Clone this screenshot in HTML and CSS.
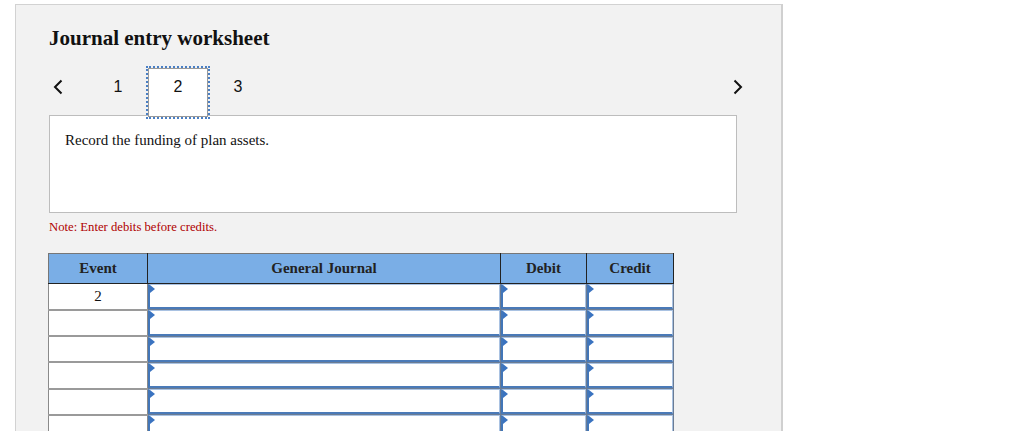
FILE: index.html
```html
<!DOCTYPE html>
<html>
<head>
<meta charset="utf-8">
<link rel="stylesheet" href="styles.css">
</head>
<body>
<div class="panel">
  <h1 class="title">Journal entry worksheet</h1>
  <div class="nav">
    <div class="prev"><svg width="12" height="16" viewBox="0 0 12 16"><path d="M9.5 1.5 L3 8 L9.5 14.5" fill="none" stroke="#111" stroke-width="2"/></svg></div>
    <div class="tab">1</div>
    <div class="tab active">2</div>
    <div class="tab">3</div>
    <div class="spacer"></div>
    <div class="next"><svg width="12" height="16" viewBox="0 0 12 16"><path d="M2.5 1.5 L9 8 L2.5 14.5" fill="none" stroke="#111" stroke-width="2"/></svg></div>
  </div>
  <div class="textbox">Record the funding of plan assets.</div>
  <div class="note">Note: Enter debits before credits.</div>
  <table class="journal">
    <colgroup>
      <col class="c-event"><col class="c-gj"><col class="c-debit"><col class="c-credit">
    </colgroup>
    <thead>
      <tr><th>Event</th><th>General Journal</th><th>Debit</th><th>Credit</th></tr>
    </thead>
    <tbody>
      <tr><td class="ev">2</td><td class="in"><div class="field"></div></td><td class="in"><div class="field"></div></td><td class="in"><div class="field"></div></td></tr>
      <tr><td class="ev"></td><td class="in"><div class="field"></div></td><td class="in"><div class="field"></div></td><td class="in"><div class="field"></div></td></tr>
      <tr><td class="ev"></td><td class="in"><div class="field"></div></td><td class="in"><div class="field"></div></td><td class="in"><div class="field"></div></td></tr>
      <tr><td class="ev"></td><td class="in"><div class="field"></div></td><td class="in"><div class="field"></div></td><td class="in"><div class="field"></div></td></tr>
      <tr><td class="ev"></td><td class="in"><div class="field"></div></td><td class="in"><div class="field"></div></td><td class="in"><div class="field"></div></td></tr>
      <tr><td class="ev"></td><td class="in"><div class="field"></div></td><td class="in"><div class="field"></div></td><td class="in"><div class="field"></div></td></tr>
      <tr><td class="ev"></td><td class="in"><div class="field"></div></td><td class="in"><div class="field"></div></td><td class="in"><div class="field"></div></td></tr>
    </tbody>
  </table>
</div>
</body>
</html>
```
FILE: styles.css
```css
html, body {
  margin: 0;
  padding: 0;
  background: #ffffff;
  overflow: hidden;
}
body {
  font-family: "Liberation Serif", "Times New Roman", serif;
  color: #111;
}
.panel {
  margin: 4px 0 0 15px;
  width: 688px;
  min-height: 520px;
  background: #f2f2f2;
  border: 1px solid #d2d2d2;
  border-right: 2px solid #d0d0d0;
  padding: 21px 44px 0 33px;
}
.title {
  margin: 0;
  font-size: 21px;
  line-height: 24px;
  font-weight: bold;
  color: #111;
}
.nav {
  display: flex;
  align-items: flex-start;
  height: 49px;
  margin-top: 18px;
  font-family: "Liberation Sans", Arial, sans-serif;
  font-size: 16px;
  line-height: 18px;
  color: #111;
  position: relative;
  z-index: 1;
}
.prev {
  width: 39px;
  padding-top: 11px;
  padding-left: 3px;
  box-sizing: border-box;
}
.prev svg, .next svg { display: block; }
.tab {
  width: 60px;
  height: 100%;
  text-align: center;
  padding-top: 10px;
  box-sizing: border-box;
}
.tab.active {
  background: #ffffff;
  border: 1px solid #9a9a9a;
  padding-top: 9px;
  outline: 2px dotted #4a7fc4;
  outline-offset: 0;
}
.spacer { flex: 1; }
.next {
  margin-right: -15px;
  width: 20px;
  padding-top: 11px;
}
.textbox {
  margin-top: -2px;
  height: 98px;
  box-sizing: border-box;
  background: #ffffff;
  border: 1px solid #bdbdbd;
  padding: 16px 15px 0;
  font-size: 15px;
  line-height: 17px;
}
.note {
  margin-top: 7px;
  font-size: 12.7px;
  line-height: 14px;
  color: #b00000;
}
.journal {
  margin: 19px 0 0 -1px;
  border-collapse: collapse;
  table-layout: fixed;
  width: 626px;
  border: 1px solid #777;
}
.c-event { width: 99px; }
.c-gj { width: 353px; }
.c-debit { width: 86px; }
.c-credit { width: 87px; }
.journal th {
  height: 29px;
  background: #7aaee6;
  border: 1px solid #222;
  border-top-color: #777;
  font-size: 15px;
  font-weight: bold;
  color: #222;
  padding: 0;
}
.journal th:first-child { border-left-color: #777; }
.journal td {
  height: 26.3px;
  padding: 0;
  border: 1px solid #8a8a8a;
  border-top-width: 2px;
  border-top-color: #9a9a9a;
  background: #ffffff;
  box-sizing: border-box;
}
.journal tbody tr:first-child td { border-top-width: 1px; border-top-color: #222; }
.journal td.ev {
  text-align: center;
  font-size: 15px;
  vertical-align: middle;
}
.journal td.in {
  position: relative;
  border-color: #6b7c94;
  border-top-width: 1px;
  background: #ffffff;
}
.field {
  position: absolute;
  inset: 0;
  border-left: 2px solid #4276b8;
  border-bottom: 2px solid #4a7ab8;
  border-top: 1px solid #a9c2e2;
  border-right: 1px solid #a9c2e2;
  background: #ffffff;
}
.field::before {
  content: "";
  position: absolute;
  left: 0;
  top: 0;
  width: 0;
  height: 0;
  border-top: 4px solid transparent;
  border-bottom: 4px solid transparent;
  border-left: 5px solid #3a73c0;
}
```
